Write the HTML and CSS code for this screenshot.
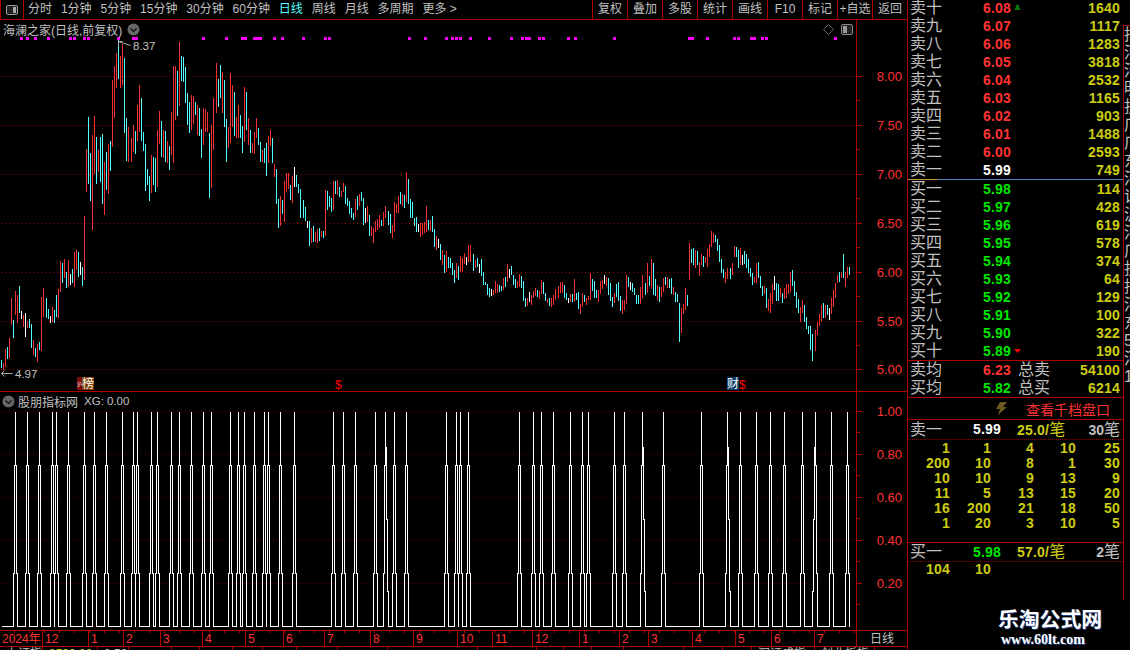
FILE: index.html
```html
<!DOCTYPE html>
<html>
<head>
    <meta charset="UTF-8">
    <title>海澜之家 - 日线</title>
    <link rel="stylesheet" href="styles.css">
</head>
<body>
    <div class="main">
        <div class="toolbar">
            <div class="layout-btn">
                <svg width="14" height="12" viewBox="0 0 14 12"><rect x="1.5" y="1.5" width="11" height="9" rx="1.5" fill="#222" stroke="#999"/><rect x="8" y="3" width="3" height="6" fill="#aaa"/></svg>
            </div>
            <div class="period-list">
                <span>分时</span>
                <span>1分钟</span>
                <span>5分钟</span>
                <span>15分钟</span>
                <span>30分钟</span>
                <span>60分钟</span>
                <span class="active">日线</span>
                <span>周线</span>
                <span>月线</span>
                <span>多周期</span>
                <span>更多 &gt;</span>
            </div>
            <div class="tool-list">
                <span>复权</span>
                <span>叠加</span>
                <span>多股</span>
                <span>统计</span>
                <span>画线</span>
                <span>F10</span>
                <span>标记</span>
                <span>+自选</span>
                <span>返回</span>
            </div>
        </div>

        <div class="pane pane-price">
            <svg id="priceChart" class="chart" width="907" height="371" viewBox="0 20 907 371">
                <g id="priceLayer"></g>
                <!-- 最高最低标注 -->
                <path d="M118.5 41.5h4M118.5 41.5v4M118.5 41.5l12 4" class="mark-line"/>
                <text x="133" y="50" class="mark-text">8.37</text>
                <path d="M1.5 373.5h11M1.5 373.5l3-3M1.5 373.5l3 3" class="mark-line"/>
                <text x="15" y="378" class="mark-text">4.97</text>
                <!-- 事件标记 -->
                <rect x="77" y="377" width="5" height="13" fill="#7a0c0c"/>
                <rect x="82" y="377" width="12" height="13" fill="#7a3c00"/>
                <text x="77" y="386" class="badge-tiny">沪</text>
                <text x="82" y="388" class="badge-text">榜</text>
                <text x="335" y="389" class="event-text">$</text>
                <rect x="727" y="377" width="12" height="13" fill="#0a3a66"/>
                <text x="727" y="388" class="badge-text">财</text>
                <text x="739" y="389" class="event-text">$</text>
                <!-- 右上角小图标 -->
                <path d="M828.5 24.5l5 5-5 5-5-5z" fill="none" stroke="#666"/>
                <rect x="841.5" y="24.5" width="11" height="10" rx="1.5" fill="#222" stroke="#888"/>
                <rect x="843" y="26" width="4" height="7" fill="#999"/>
            </svg>
            <div class="pane-title pane-title-top">
                <span>海澜之家(日线,前复权)</span>
                <svg class="fold-icon" width="13" height="13" viewBox="0 0 13 13"><circle cx="6.5" cy="6.5" r="6" fill="#666"/><path d="M3.5 5.5l3 3 3-3" fill="none" stroke="#111" stroke-width="1.2"/></svg>
            </div>
        </div>

        <div class="pane pane-indicator">
            <svg id="indicatorChart" class="chart" width="907" height="238" viewBox="0 392 907 238">
                <g id="indicatorLayer"></g>
            </svg>
            <div class="pane-title pane-title-sub">
                <svg class="fold-icon" width="13" height="13" viewBox="0 0 13 13"><circle cx="6.5" cy="6.5" r="6" fill="#666"/><path d="M3.5 5.5l3 3 3-3" fill="none" stroke="#111" stroke-width="1.2"/></svg>
                <span>股朋指标网</span>
                <span class="xg-value">XG: 0.00</span>
            </div>
        </div>

        <div class="time-axis">
            <div id="timeCells" class="time-cells"></div>
            <div class="time-unit">日线</div>
        </div>

        <div class="status-bar">
            <span style="width:43px">上证指数</span>
            <span style="width:55px" class="status-yellow">3500.00</span>
            <span style="width:31px">0.50</span>
            <span style="width:43px"></span>
            <span style="width:28px"></span>
            <span style="width:33px"></span>
            <span style="width:30px"></span>
            <span style="width:34px"></span>
            <span style="width:41px"></span>
            <span style="width:50px"></span>
            <span style="width:90px"></span>
            <span style="width:59px"></span>
            <span style="width:27px"></span>
            <span style="width:28px"></span>
            <span style="width:32px"></span>
            <span style="width:60px"></span>
            <span style="width:39px"></span>
            <span style="width:29px"></span>
            <span style="width:63px">深证成指</span>
            <span style="width:60px">创业板指</span>
        </div>
    </div>

    <div class="side">
        <div class="quote">
            <div class="book book-sell">
                <div class="book-row"><span class="label">卖十</span><span class="price up">6.08<svg class="arrow" width="7" height="7" viewBox="0 0 7 7"><path d="M3.5 0L6 3H4.5L7 6H0l2.500-3H1z" fill="#0a7a0a"/></svg></span><span class="vol">1640</span></div>
                <div class="book-row"><span class="label">卖九</span><span class="price up">6.07</span><span class="vol">1117</span></div>
                <div class="book-row"><span class="label">卖八</span><span class="price up">6.06</span><span class="vol">1283</span></div>
                <div class="book-row"><span class="label">卖七</span><span class="price up">6.05</span><span class="vol">3818</span></div>
                <div class="book-row"><span class="label">卖六</span><span class="price up">6.04</span><span class="vol">2532</span></div>
                <div class="book-row"><span class="label">卖五</span><span class="price up">6.03</span><span class="vol">1165</span></div>
                <div class="book-row"><span class="label">卖四</span><span class="price up">6.02</span><span class="vol">903</span></div>
                <div class="book-row"><span class="label">卖三</span><span class="price up">6.01</span><span class="vol">1488</span></div>
                <div class="book-row"><span class="label">卖二</span><span class="price up">6.00</span><span class="vol">2593</span></div>
                <div class="book-row"><span class="label">卖一</span><span class="price flat">5.99</span><span class="vol">749</span></div>
            </div>
            <div class="book book-buy">
                <div class="book-row"><span class="label">买一</span><span class="price down">5.98</span><span class="vol">114</span></div>
                <div class="book-row"><span class="label">买二</span><span class="price down">5.97</span><span class="vol">428</span></div>
                <div class="book-row"><span class="label">买三</span><span class="price down">5.96</span><span class="vol">619</span></div>
                <div class="book-row"><span class="label">买四</span><span class="price down">5.95</span><span class="vol">578</span></div>
                <div class="book-row"><span class="label">买五</span><span class="price down">5.94</span><span class="vol">374</span></div>
                <div class="book-row"><span class="label">买六</span><span class="price down">5.93</span><span class="vol">64</span></div>
                <div class="book-row"><span class="label">买七</span><span class="price down">5.92</span><span class="vol">129</span></div>
                <div class="book-row"><span class="label">买八</span><span class="price down">5.91</span><span class="vol">100</span></div>
                <div class="book-row"><span class="label">买九</span><span class="price down">5.90</span><span class="vol">322</span></div>
                <div class="book-row"><span class="label">买十</span><span class="price down">5.89<svg class="arrow" width="7" height="7" viewBox="0 0 7 7"><path d="M0 2h7L3.500 6z" fill="#f00"/></svg></span><span class="vol">190</span></div>
            </div>
            <div class="avg-block">
                <div class="avg-row"><span class="label">卖均</span><span class="price up">6.23</span><span class="label">总卖</span><span class="vol">54100</span></div>
                <div class="avg-row"><span class="label">买均</span><span class="price down">5.82</span><span class="label">总买</span><span class="vol">6214</span></div>
            </div>
            <div class="depth-link">
                <svg width="12" height="13" viewBox="0 0 12 13"><path d="M4 0h7L7 5h4L2 13l2-6H0z" fill="#6b5a20"/></svg>
                <span>查看千档盘口</span>
            </div>
            <div class="queue-head">
                <span class="label">卖一</span>
                <span class="price flat">5.99</span>
                <span class="queue-avg">25.0/<em>笔</em></span>
                <span class="queue-count">30<em>笔</em></span>
            </div>
            <div class="queue-grid queue-sell">
                <span>1</span><span>1</span><span>4</span><span>10</span><span>25</span>
                <span>200</span><span>10</span><span>8</span><span>1</span><span>30</span>
                <span>10</span><span>10</span><span>9</span><span>13</span><span>9</span>
                <span>11</span><span>5</span><span>13</span><span>15</span><span>20</span>
                <span>16</span><span>200</span><span>21</span><span>18</span><span>50</span>
                <span>1</span><span>20</span><span>3</span><span>10</span><span>5</span>
            </div>
            <div class="queue-head queue-head-buy">
                <span class="label">买一</span>
                <span class="price down">5.98</span>
                <span class="queue-avg">57.0/<em>笔</em></span>
                <span class="queue-count">2<em>笔</em></span>
            </div>
            <div class="queue-grid">
                <span>104</span><span>10</span>
            </div>
        </div>
        <div class="peek">
            <div>招</div><div>河</div><div>河</div><div>明</div><div>投</div><div>广</div><div>广</div><div>东</div>
            <div>河</div><div>证</div><div>沪</div><div>河</div><div>广</div><div>投</div><div>招</div><div>河</div>
            <div>东</div><div>5</div><div>河</div><div>1</div>
        </div>
    </div>

    <div class="watermark">
        <div class="watermark-name">乐淘公式网</div>
        <div class="watermark-url">www.60lt.com</div>
    </div>

    <script src="app.js"></script>
</body>
</html>
```

FILE: styles.css
```css
* {
    margin: 0;
    padding: 0;
    box-sizing: border-box;
}

body {
    position: relative;
    display: flex;
    width: 1130px;
    height: 650px;
    overflow: hidden;
    background: #000;
    color: #c0c0c0;
    font-family: "Liberation Sans", "Noto Sans CJK SC", sans-serif;
    font-size: 12px;
}

.main {
    width: 908px;
    height: 650px;
    flex-shrink: 0;
    border-right: 1px solid #b00000;
}

.toolbar {
    display: flex;
    height: 20px;
    line-height: 19px;
    border-bottom: 1px solid #b00000;
}

.layout-btn {
    display: flex;
    align-items: center;
    justify-content: center;
    width: 24px;
    border-left: 1px solid #b00000;
    border-right: 1px solid #b00000;
}

.period-list {
    display: flex;
    gap: 8.9px;
    padding-left: 4px;
}

.period-list .active {
    color: #55ffff;
}

.tool-list {
    display: flex;
    margin-left: auto;
}

.tool-list span {
    width: 35px;
    text-align: center;
    border-left: 1px solid #b00000;
}

.pane {
    position: relative;
}

.pane-price {
    height: 372px;
    border-bottom: 1px solid #b00000;
}

.pane-indicator {
    height: 238px;
}

.chart {
    display: block;
}

.pane-title {
    position: absolute;
    display: flex;
    align-items: center;
    left: 3px;
    gap: 6px;
    height: 18px;
}

.pane-title-top {
    top: 0;
    gap: 5px;
}

.pane-title-sub {
    top: 0;
    left: 2px;
    gap: 3px;
}

.xg-value {
    margin-left: 3px;
    font-size: 11.5px;
}

.mark-line {
    fill: none;
    stroke: #aaa;
}

.mark-text {
    fill: #c0c0c0;
    font-size: 11.5px;
}

.badge-text {
    fill: #fff;
    font-size: 12px;
}

.badge-tiny {
    fill: #fff;
    font-size: 5px;
}

.event-text {
    fill: #f00;
    font-size: 12px;
}

.axis-text {
    fill: #ff3232;
    font-size: 13px;
    text-anchor: end;
}

.time-axis {
    display: flex;
    height: 17px;
    border-top: 1px solid #b00000;
    border-bottom: 1px solid #b00000;
    line-height: 16px;
}

.time-cells {
    display: flex;
    width: 856px;
    color: #ff3232;
    background: repeating-linear-gradient(90deg, transparent 0, transparent 14px, #b00000 14px, #b00000 15px) 0 0 / 100% 2px no-repeat;
}

.time-cell {
    padding-left: 2px;
    border-left: 1px solid #b00000;
}

.time-cell:first-child {
    border-left: none;
}

.time-unit {
    flex: 1;
    text-align: center;
    border-left: 1px solid #b00000;
}

.status-bar {
    display: flex;
    height: 3px;
    overflow: hidden;
    line-height: 14px;
    color: #c0c0c0;
}

.status-bar span {
    height: 3px;
    padding-left: 6px;
    border-right: 1px solid #b00000;
    white-space: nowrap;
    overflow: hidden;
}

.status-yellow {
    color: #cccc14;
}

.side {
    display: flex;
    flex: 1;
}

.quote {
    width: 215px;
    flex-shrink: 0;
}

.book {
    margin-top: -1px;
}

.book-sell {
    height: 181px;
    border-bottom: 1px solid #4a86c0;
    position: relative;
}

/* 买卖分割线左段是橙色 */
.book-sell::after {
    content: "";
    position: absolute;
    left: 0;
    bottom: -1px;
    width: 30px;
    height: 1px;
    background: #c8923c;
}

.book-buy {
    margin-top: 0;
    height: 181px;
    border-bottom: 1px solid #b00000;
}

.book-row {
    display: grid;
    grid-template-columns: 73px 60px 1fr;
    height: 18px;
    line-height: 18px;
    padding: 0 3px 0 2px;
}

.label {
    font-size: 16px;
    white-space: nowrap;
}

.price,
.vol,
.queue-avg,
.queue-grid {
    font-size: 14px;
    font-weight: bold;
    letter-spacing: 0.2px;
}

.price {
    white-space: nowrap;
}

.vol {
    text-align: right;
    color: #cccc14;
}

.up {
    color: #ff3232;
}

.down {
    color: #00e600;
}

.flat {
    color: #fff;
}

.arrow {
    margin-left: 3px;
    vertical-align: 2px;
}

.avg-block {
    height: 37px;
    border-bottom: 1px solid #b00000;
}

.avg-row {
    display: grid;
    grid-template-columns: 73px 35px 50px 1fr;
    height: 18px;
    line-height: 18px;
    padding: 0 3px 0 2px;
}

.depth-link {
    display: flex;
    align-items: center;
    height: 22px;
    padding-left: 88px;
    gap: 18px;
    border-bottom: 1px solid #b00000;
    color: #ff3232;
    font-size: 14px;
}

.queue-head {
    display: grid;
    grid-template-columns: 63px 44px 1fr auto;
    height: 20px;
    line-height: 19px;
    padding: 0 3px 0 2px;
    border-bottom: 1px dotted #a00000;
}

.queue-head-buy {
    height: 19px;
    line-height: 18px;
}

.queue-head em,
.queue-count em {
    font-style: normal;
    font-weight: normal;
    font-size: 16px;
}

.queue-avg {
    color: #cccc14;
}

.queue-count {
    font-size: 14px;
    font-weight: bold;
    color: #c0c0c0;
}

.queue-grid {
    display: grid;
    grid-template-columns: 42px 41px 43px 42px 44px;
    grid-auto-rows: 15px;
    line-height: 15px;
    color: #cccc14;
    text-align: right;
}

.queue-sell {
    height: 103px;
    padding-top: 1px;
    border-bottom: 1px solid #b00000;
}

.peek {
    flex: 1;
    height: 575px;
    margin-top: 25px;
    padding-top: 0;
    overflow: hidden;
    border-left: 1px solid #b00000;
    border-top: 1px solid #b00000;
    font-size: 16px;
    line-height: 18px;
    white-space: nowrap;
}

.watermark {
    position: absolute;
    left: 998px;
    top: 608px;
    width: 104px;
    color: #fff;
    font-weight: bold;
    text-shadow: 1px 1px 0 #24408c;
}

.watermark-name {
    font-size: 20.800px;
    line-height: 24px;
    white-space: nowrap;
}

.watermark-url {
    padding-left: 3px;
    font-family: "Liberation Serif", serif;
    font-size: 14px;
    line-height: 16px;
}
```

FILE: app.js
```js
const SVG_NS = 'http://www.w3.org/2000/svg';

// 日线数据：[x, 最高y, 最低y, 颜色]  r阳线 c阴线 w平盘
const bars = [
    [1,360,368,'c'],[3,363,370,'r'],[5,349,367,'r'],[7,347,359,'c'],[9,338,358,'r'],[11,298,325,'r'],[13,320,338,'c'],[15,291,315,'r'],[17,295,323,'r'],[19,286,313,'c'],
    [21,311,319,'w'],[23,315,327,'r'],[25,313,337,'w'],[27,321,328,'r'],[29,319,328,'c'],[31,324,348,'c'],[33,340,355,'r'],[35,348,357,'c'],[37,344,362,'r'],[39,342,350,'c'],
    [41,297,351,'r'],[43,288,317,'r'],[46,298,318,'c'],[48,309,319,'c'],[50,316,323,'w'],[52,307,322,'r'],[54,310,323,'c'],[56,295,317,'c'],[58,289,318,'r'],[60,261,292,'r'],
    [62,263,283,'c'],[64,259,278,'r'],[66,272,288,'c'],[68,260,287,'r'],[70,274,285,'w'],[72,269,283,'c'],[74,252,287,'r'],[76,250,270,'r'],[78,252,277,'c'],[80,262,275,'w'],
    [82,267,286,'c'],[84,216,280,'r'],[86,149,192,'r'],[88,117,184,'c'],[90,153,201,'c'],[92,135,230,'r'],[94,116,174,'r'],[96,137,184,'c'],[98,150,172,'r'],[100,137,182,'c'],
    [102,134,204,'c'],[104,162,215,'r'],[106,152,190,'c'],[108,144,194,'r'],[110,141,171,'c'],[112,80,147,'r'],[114,66,118,'r'],[116,53,88,'r'],[118,40,79,'c'],[120,56,88,'r'],
    [122,44,85,'r'],[124,58,133,'c'],[126,118,161,'c'],[128,127,162,'r'],[131,138,162,'r'],[133,125,152,'r'],[135,131,154,'c'],[137,105,141,'r'],[139,85,132,'r'],[141,98,141,'c'],
    [143,132,151,'c'],[145,144,191,'c'],[147,169,185,'c'],[149,176,201,'c'],[151,155,193,'r'],[153,157,185,'c'],[155,158,192,'c'],[157,130,187,'r'],[159,111,144,'r'],[161,121,157,'c'],
    [163,130,158,'r'],[165,131,162,'c'],[167,141,163,'r'],[169,146,170,'c'],[171,112,155,'r'],[173,66,163,'r'],[175,66,120,'r'],[177,71,116,'c'],[179,42,106,'r'],[181,56,81,'c'],
    [183,57,82,'c'],[185,67,103,'c'],[187,93,125,'c'],[189,102,133,'c'],[191,95,130,'r'],[193,96,124,'r'],[195,102,115,'c'],[197,105,135,'r'],[199,108,136,'c'],[201,129,158,'c'],
    [203,108,145,'r'],[205,109,132,'r'],[207,112,132,'r'],[209,133,198,'c'],[211,125,188,'r'],[213,98,150,'r'],[216,63,113,'r'],[218,79,107,'c'],[220,65,98,'c'],[222,72,113,'r'],
    [224,80,127,'c'],[226,119,162,'c'],[228,127,148,'r'],[230,73,143,'r'],[232,85,127,'r'],[234,92,136,'c'],[236,117,138,'r'],[238,105,138,'r'],[240,115,138,'c'],[242,126,153,'c'],
    [244,87,142,'r'],[246,92,130,'c'],[248,118,145,'r'],[250,130,153,'c'],[252,143,153,'r'],[254,132,154,'r'],[256,118,138,'r'],[258,128,145,'c'],[260,142,162,'c'],[262,150,162,'r'],
    [264,148,163,'c'],[266,143,176,'c'],[268,136,163,'r'],[270,130,146,'r'],[272,138,163,'c'],[274,164,177,'r'],[276,169,204,'c'],[278,199,228,'c'],[280,196,226,'r'],[282,200,214,'c'],
    [284,181,222,'r'],[286,173,192,'r'],[288,173,189,'r'],[290,185,200,'c'],[292,176,203,'r'],[294,167,187,'w'],[296,175,187,'c'],[298,184,193,'c'],[300,189,218,'c'],[303,200,218,'c'],
    [305,207,221,'c'],[307,221,228,'w'],[309,221,246,'c'],[311,228,243,'r'],[313,226,242,'c'],[315,232,242,'r'],[317,229,243,'r'],[319,228,241,'c'],[321,231,237,'r'],[323,231,238,'c'],
    [325,190,236,'r'],[327,191,210,'c'],[329,196,207,'c'],[331,198,212,'c'],[333,181,210,'r'],[335,181,194,'c'],[337,180,195,'r'],[339,187,197,'c'],[341,191,197,'r'],[343,183,192,'r'],
    [345,186,204,'c'],[347,198,206,'c'],[349,201,214,'c'],[351,208,218,'c'],[353,213,220,'c'],[355,199,217,'r'],[357,196,210,'c'],[359,194,206,'r'],[361,192,201,'c'],[363,198,225,'c'],
    [365,208,223,'w'],[367,206,222,'r'],[369,215,236,'c'],[371,226,236,'r'],[373,228,243,'r'],[375,221,232,'r'],[377,219,230,'r'],[379,215,228,'r'],[381,220,226,'c'],[383,212,226,'r'],
    [385,206,218,'r'],[388,211,225,'c'],[390,214,233,'c'],[392,225,238,'r'],[394,202,232,'r'],[396,204,213,'r'],[398,196,213,'r'],[400,192,204,'c'],[402,194,206,'r'],[404,195,208,'c'],
    [406,172,202,'r'],[408,179,204,'c'],[410,199,218,'c'],[412,202,218,'c'],[414,218,226,'c'],[416,217,232,'c'],[418,224,232,'w'],[420,223,237,'r'],[422,223,235,'r'],[424,222,233,'r'],
    [426,206,232,'r'],[428,220,230,'c'],[430,220,231,'r'],[432,216,232,'c'],[434,229,247,'c'],[436,236,250,'r'],[438,239,248,'w'],[440,244,260,'c'],[442,250,265,'r'],[444,255,273,'c'],
    [446,251,272,'r'],[448,257,268,'c'],[450,258,268,'c'],[452,263,275,'c'],[454,270,283,'c'],[456,263,278,'r'],[458,266,280,'c'],[460,256,272,'r'],[462,258,272,'r'],[464,253,264,'r'],
    [466,257,265,'w'],[468,245,262,'r'],[470,245,262,'r'],[473,254,271,'c'],[475,260,268,'r'],[477,258,267,'c'],[479,264,273,'w'],[481,259,276,'c'],[483,272,285,'c'],[485,282,285,'c'],
    [487,284,295,'c'],[489,288,297,'c'],[491,289,296,'w'],[493,290,295,'r'],[495,281,293,'r'],[497,284,293,'r'],[499,285,292,'c'],[501,286,291,'c'],[503,278,290,'r'],[505,277,287,'c'],
    [507,264,282,'r'],[509,269,278,'w'],[511,266,275,'c'],[513,275,285,'c'],[515,279,288,'c'],[517,281,288,'r'],[519,274,287,'r'],[521,276,288,'c'],[523,281,301,'c'],[525,298,307,'c'],
    [527,298,306,'r'],[529,292,302,'w'],[531,295,305,'r'],[533,291,298,'r'],[535,288,296,'r'],[537,290,297,'c'],[539,291,299,'r'],[541,280,294,'r'],[543,282,294,'c'],[545,293,301,'c'],
    [547,299,303,'r'],[549,298,306,'c'],[551,298,307,'r'],[553,295,305,'r'],[555,289,300,'r'],[558,286,298,'r'],[560,282,293,'r'],[562,282,293,'r'],[564,285,298,'c'],[566,293,300,'c'],
    [568,298,303,'w'],[570,294,302,'r'],[572,294,302,'c'],[574,279,301,'r'],[576,293,300,'c'],[578,292,309,'c'],[580,304,314,'r'],[582,293,307,'r'],[584,295,302,'c'],[586,298,305,'r'],
    [588,296,300,'r'],[590,273,300,'r'],[592,279,291,'c'],[594,281,298,'c'],[596,290,298,'c'],[598,290,302,'r'],[600,281,294,'r'],[602,280,289,'r'],[604,275,284,'w'],[606,277,286,'r'],
    [608,278,295,'c'],[610,283,301,'c'],[612,297,307,'c'],[614,293,303,'r'],[616,284,297,'c'],[618,282,301,'c'],[620,296,311,'c'],[622,300,314,'r'],[624,300,310,'r'],[626,275,304,'r'],
    [628,277,287,'c'],[630,282,290,'w'],[632,283,292,'c'],[634,288,295,'c'],[636,295,304,'c'],[638,295,304,'c'],[640,287,304,'r'],[642,275,298,'r'],[645,283,295,'c'],[647,263,293,'r'],
    [649,276,286,'c'],[651,259,289,'r'],[653,263,295,'c'],[655,279,296,'c'],[657,285,300,'r'],[659,287,302,'c'],[661,287,297,'r'],[663,278,292,'r'],[665,277,285,'c'],[667,277,288,'r'],
    [669,279,288,'c'],[671,278,294,'c'],[673,287,295,'r'],[675,292,302,'c'],[677,294,302,'c'],[679,303,342,'c'],[681,308,333,'r'],[683,304,314,'r'],[685,288,310,'r'],[687,295,306,'c'],
    [689,243,280,'r'],[691,249,263,'c'],[693,248,265,'c'],[695,250,268,'r'],[697,251,265,'c'],[699,262,276,'r'],[701,254,265,'r'],[703,256,267,'c'],[705,257,263,'r'],[707,249,267,'r'],
    [709,244,257,'r'],[711,231,247,'r'],[713,233,243,'r'],[715,235,242,'c'],[717,239,251,'c'],[719,245,262,'c'],[721,259,273,'c'],[723,269,278,'c'],[725,272,283,'r'],[727,268,279,'r'],
    [730,268,279,'c'],[732,263,275,'r'],[734,246,257,'r'],[736,247,257,'c'],[738,250,268,'c'],[740,248,265,'r'],[742,255,265,'w'],[744,251,264,'c'],[746,254,268,'c'],
    [748,259,273,'c'],[750,268,277,'c'],[752,273,285,'c'],[754,277,283,'r'],[756,263,283,'r'],[758,262,278,'c'],[760,276,288,'c'],[762,286,296,'c'],[764,286,294,'r'],[766,288,308,'c'],
    [768,299,311,'r'],[770,293,313,'r'],[772,284,304,'r'],[774,276,290,'w'],[776,283,301,'c'],[778,284,301,'c'],[780,288,297,'r'],[782,293,303,'c'],[784,288,299,'r'],[786,284,298,'r'],
    [788,284,294,'r'],[790,272,292,'r'],[792,270,286,'c'],[794,281,296,'c'],[796,292,308,'c'],[798,299,313,'c'],[800,307,322,'r'],[802,300,313,'r'],[804,305,322,'c'],[806,317,329,'c'],
    [808,326,334,'c'],[810,326,350,'c'],[812,334,361,'c'],[815,330,351,'r'],[817,322,335,'r'],[819,314,326,'r'],[821,305,321,'r'],[823,303,318,'c'],[825,305,318,'r'],[827,305,315,'c'],
    [829,308,320,'w'],[831,298,314,'r'],[833,290,307,'r'],[835,283,298,'r'],[837,275,283,'r'],[839,272,282,'c'],[841,272,278,'r'],[843,254,278,'c'],[845,272,287,'r'],[847,267,278,'r'],
    [849,267,275,'c']
];

const barColors = { r: '#f23232', c: '#55ffff', w: '#ffffff' };

// 顶部紫色信号点
const signals = [20,26,34,47,69,73,83,87,117,132,135,202,225,241,244,253,256,259,273,281,302,324,328,408,424,445,451,455,459,
    469,488,510,521,525,528,538,542,567,574,613,688,691,706,733,737,750,753,761,765,834];

// 副图脉冲：普通 / 右侧台阶 / 左侧台阶
const pulses = [15,27,39,52,56,68,84,94,106,122,133,137,151,157,171,179,191,203,211,230,238,244,254,264,268,280,294,333,343,355,375,
    385,394,406,446,456,460,468,519,533,541,553,570,582,588,614,624,642,663,701,727,740,756,770,784,802,815,831,847];
const stepRight = [385, 642, 727];
const stepLeft = [815];

const priceTicks = [[8.00,76],[7.50,125],[7.00,174],[6.50,223],[6.00,272],[5.50,321],[5.00,369]];
const indicatorTicks = [[1.00,411],[0.80,454],[0.60,497],[0.40,540],[0.20,583]];

const months = [[0,'2024年'],[42,'12'],[88,'1'],[123,'2'],[160,'3'],[202,'4'],[245,'5'],[283,'6'],[324,'7'],[370,'8'],[413,'9'],
    [457,'10'],[492,'11'],[532,'12'],[579,'1'],[619,'2'],[648,'3'],[692,'4'],[735,'5'],[771,'6'],[814,'7']];

function el(parent, name, attrs, text) {
    const node = document.createElementNS(SVG_NS, name);
    Object.keys(attrs).forEach(k => node.setAttribute(k, attrs[k]));
    if (text) node.textContent = text;
    parent.appendChild(node);
    return node;
}

function drawGrid(layer, ticks, color) {
    ticks.forEach(t => {
        el(layer, 'line', { x1: 1, x2: 856, y1: t[1] + 0.5, y2: t[1] + 0.5, stroke: color, 'stroke-dasharray': '1 3' });
    });
}

function drawAxis(layer, ticks, top, bottom, step) {
    el(layer, 'line', { x1: 856.5, x2: 856.5, y1: top, y2: bottom, stroke: '#b00000' });
    ticks.forEach(t => {
        el(layer, 'line', { x1: 857, x2: 862, y1: t[1] + 0.5, y2: t[1] + 0.5, stroke: '#b00000' });
        el(layer, 'line', { x1: 857, x2: 860, y1: t[1] + step + 0.5, y2: t[1] + step + 0.5, stroke: '#b00000' });
        el(layer, 'text', { x: 902, y: t[1] + 5, class: 'axis-text' }, t[0].toFixed(2));
    });
}

function pulsePoints(c) {
    if (stepRight.includes(c)) {
        return [[c-2,626],[c-2,573],[c-1,573],[c-1,465],[c,465],[c,411],[c,447],[c+1,447],[c+1,519],[c+2,519],[c+2,591],[c+3,591],[c+3,626]];
    }
    if (stepLeft.includes(c)) {
        return [[c-3,626],[c-3,591],[c-2,591],[c-2,519],[c-1,519],[c-1,447],[c,447],[c,411],[c,465],[c+1,465],[c+1,573],[c+2,573],[c+2,626]];
    }
    return [[c-2,626],[c-2,573],[c-1,573],[c-1,465],[c,465],[c,411],[c,465],[c+1,465],[c+1,573],[c+2,573],[c+2,626]];
}

function drawPrice() {
    const layer = document.getElementById('priceLayer');
    drawGrid(layer, priceTicks, '#a00000');
    signals.forEach(x => {
        el(layer, 'rect', { x: x, y: 37, width: 3, height: 3, fill: '#ff00ff' });
    });
    bars.forEach(b => {
        el(layer, 'rect', { x: b[0], y: b[1], width: 1, height: b[2] - b[1], fill: barColors[b[3]], 'shape-rendering': 'crispEdges' });
    });
    drawAxis(layer, priceTicks, 20, 391, 24);
}

function drawIndicator() {
    const layer = document.getElementById('indicatorLayer');
    drawGrid(layer, indicatorTicks, '#700000');
    let pts = [[1,626]];
    pulses.forEach(c => { pts = pts.concat(pulsePoints(c)); });
    const line = pts.map(p => (p[0] + 0.5) + ',' + (p[1] + 0.5)).join(' ');
    el(layer, 'polyline', { points: line, fill: 'none', stroke: '#fff', 'shape-rendering': 'crispEdges' });
    drawAxis(layer, indicatorTicks, 392, 630, 21);
}

function drawMonths() {
    const box = document.getElementById('timeCells');
    box.innerHTML = months.map((m, i) => {
        const next = i + 1 < months.length ? months[i + 1][0] : 856;
        return `<div class="time-cell" style="width:${next - m[0]}px">${m[1]}</div>`;
    }).join('');
}

drawPrice();
drawIndicator();
drawMonths();
```
